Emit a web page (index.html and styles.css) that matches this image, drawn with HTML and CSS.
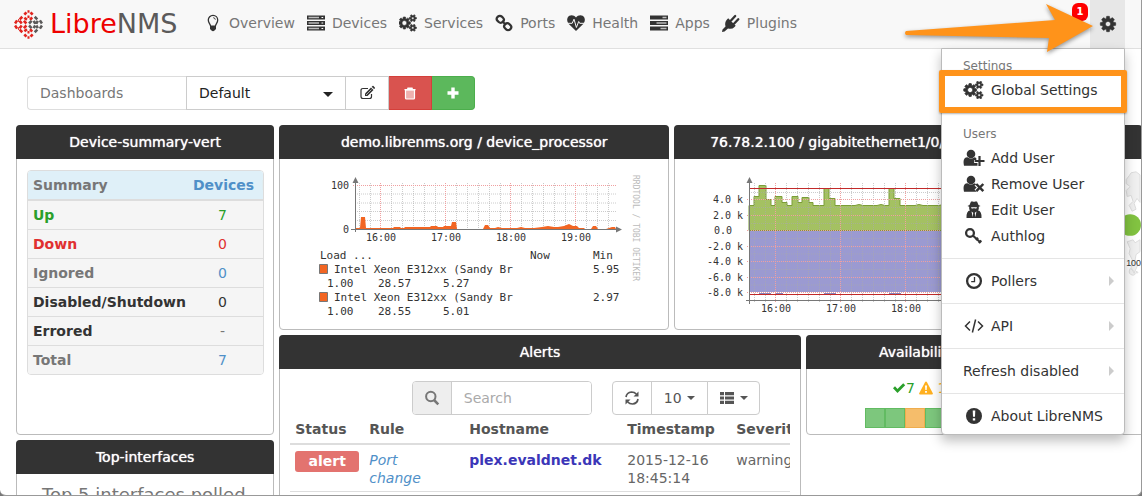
FILE: index.html
```html
<!DOCTYPE html>
<html lang="en">
<head>
<meta charset="utf-8">
<title>LibreNMS</title>
<link rel="stylesheet" href="styles.css">
</head>
<body>
<svg class="sprite" aria-hidden="true">
  <symbol id="i-bulb" viewBox="0 0 18 18"><path d="M6.6 12.2C6.3 9.800 4.300 9 4.300 6A4.700 4.700 0 0 1 13.700 6C13.700 9 11.700 9.800 11.400 12.200Z" fill="none" stroke="currentColor" stroke-width="1.300"/><path d="M9.300 3.700Q11 3.800 11.300 5.600" fill="none" stroke="currentColor"/><path d="M6 12h6v3l-1.500 1.500Q9 18 7.500 16.500L6 15z"/></symbol>
  <symbol id="i-server" viewBox="0 0 18 18"><path d="M0 1.500h18v4H0zM0 7h18v4H0zM0 12.500h18v4H0z"/><path d="M1.500 2.800H12v1.400H1.500zM1.500 8.300H12v1.400H1.500zM1.500 13.800H12v1.400H1.500z" fill="#bbb"/><path d="M14.500 3h1.700v1h-1.700zM14.500 8.500h1.700v1h-1.700zM14.500 14h1.700v1h-1.700z" fill="#fff"/></symbol>
  <symbol id="i-tasks" viewBox="0 0 18 18"><path d="M0 1.500h18v4H0zM0 7h18v4H0zM0 12.500h18v4H0z"/><path d="M12.500 2.800h4v1.400h-4zM6.500 8.300h10v1.400h-10zM10.500 13.800h6v1.400h-6z" fill="#bbb"/></symbol>
  <symbol id="i-cog" viewBox="0 0 1792 1792"><path d="M1152 896q0-106-75-181t-181-75-181 75-75 181 75 181 181 75 181-75 75-181zm512-109v222q0 12-8 23t-20 13l-185 28q-19 54-39 91 35 50 107 138 10 12 10 25t-9 23q-27 37-99 108t-94 71q-12 0-26-9l-138-108q-44 23-91 38-16 136-29 186-7 28-36 28h-222q-14 0-24.500-8.500t-11.500-21.500l-28-184q-49-16-90-37l-141 107q-10 9-25 9-14 0-25-11-126-114-165-168-7-10-7-23 0-12 8-23 15-21 51-66.500t54-70.500q-27-50-41-99l-183-27q-13-2-21-12.500t-8-23.500v-222q0-12 8-23t19-13l186-28q14-46 39-92-40-57-107-138-10-12-10-24 0-10 9-23 26-36 98.500-107.500t94.500-71.500q13 0 26 10l138 107q44-23 91-38 16-136 29-186 7-28 36-28h222q14 0 24.500 8.500t11.500 21.500l28 184q49 16 90 37l142-107q9-9 24-9 13 0 25 10 129 119 165 170 7 8 7 22 0 12-8 23-15 21-51 66.500t-54 70.500q26 50 41 98l183 28q13 2 21 12.500t8 23.500z" stroke="currentColor" stroke-width="50"/></symbol>
  <symbol id="i-cogs" viewBox="0 0 1920 1792"><g stroke="currentColor" stroke-width="70"><path d="M832 896q0-106-75-181t-181-75-181 75-75 181 75 181 181 75 181-75 75-181zm384-91v185q0 10-7 19.500t-16 10.500l-155 24q-11 35-32 76 34 48 90 115 7 11 7 20 0 12-7 19-23 30-82.500 89.500t-78.500 59.500q-11 0-21-7l-115-90q-37 19-77 31-11 108-23 155-7 24-30 24h-186q-11 0-20-7.500t-10-17.500l-23-153q-34-10-75-31l-118 89q-7 7-20 7-11 0-21-8-144-133-144-160 0-9 7-19 10-14 41-53t47-61q-23-44-35-82l-152-24q-10-1-17-9.500t-7-19.500v-185q0-10 7-19.500t16-10.500l155-24q11-35 32-76-34-48-90-115-7-11-7-20 0-12 7-20 22-30 82-89t79-59q11 0 21 7l115 90q34-18 77-32 11-108 23-154 7-24 30-24h186q11 0 20 7.500t10 17.500l23 153q34 10 75 31l118-89q8-7 20-7 11 0 21 8 144 133 144 160 0 8-7 19-12 16-42 54t-45 60q23 48 34 82l152 23q10 2 17 10.500t7 19.500z"/><g id="smallcog"><path d="M1600 1408q0-52-38-90t-90-38-90 38-38 90q0 53 37.500 90.500t90.500 37.500 90.500-37.500 37.500-90.500zm256-70v140q0 16-149 31-12 27-30 52 51 113 51 138 0 4-4 7-122 71-124 71-8 0-46-47t-52-68q-20 2-30 2t-30-2q-14 21-52 68t-46 47q-2 0-124-71-4-3-4-7 0-25 51-138-18-25-30-52-149-15-149-31v-140q0-16 149-31 13-29 30-52-51-113-51-138 0-4 4-7 4-2 35-20t59-34 30-16q8 0 46 46.500t52 67.500q20-2 30-2t30 2q51-71 92-112l6-2q4 0 124 70 4 3 4 7 0 25-51 138 17 23 30 52 149 15 149 31z"/></g><use href="#smallcog" y="-1024"/></g></symbol>
  <symbol id="i-link" viewBox="0 0 18 18"><g fill="none" stroke="currentColor" stroke-width="2.200"><rect x="-3.600" y="-3" width="7.200" height="6" rx="2.800" transform="translate(5.300 5.300) rotate(45)"/><rect x="-3.600" y="-3" width="7.200" height="6" rx="2.800" transform="translate(12.700 12.700) rotate(45)"/><path d="M7 7l4 4"/></g></symbol>
  <symbol id="i-heart" viewBox="0 0 18 18"><path d="M9 17L1.800 10Q-.8 6.700.7 3.600C2.300.6 6.800.6 9 3.600c2.200-3 6.700-3 8.300 0q1.500 3.100-1.100 6.400z"/><path d="M0 9.300h5.200L7 5.200l2.400 8.300 2.300-6 1 1.800H18" fill="none" stroke="#f8f8f8" stroke-width="1"/></symbol>
  <symbol id="i-plug" viewBox="0 0 18 18"><path d="M0 18l.5-2.500L3.500 12.500Q2.300 8.500 5 5.500l1.200-1.200 7.500 7.500L12.500 13q-2.500 2.700-6.500 1.500L2.500 17.500z"/><path d="M9 6.500L13.200 2M12 9.800l4.300-4.500" stroke="currentColor" stroke-width="2.300" stroke-linecap="round"/></symbol>
  <symbol id="i-plus-user" viewBox="0 0 22 18"><circle cx="8" cy="5" r="4.300"/><path d="M1 16.800Q-.8 8.500 4.500 8.300q3.500 2.400 7 0l1.800.8v1.900h-2.200v3h3.400v2.800z"/><path d="M16.500 7v10M11.700 12h9.800" stroke="currentColor" stroke-width="2.200"/></symbol>
  <symbol id="i-times-user" viewBox="0 0 22 18"><circle cx="8" cy="5" r="4.300"/><path d="M1 16.800Q-.8 8.500 4.500 8.300q3.500 2.400 7 0l1.800 1-1.800 1.500 2.200 1.700-2.200 2 2.200 2.300z"/><path d="M13.300 9l7 7.200M20.300 9l-7 7.200" stroke="currentColor" stroke-width="2.500"/></symbol>
  <symbol id="i-secret" viewBox="0 0 22 18"><path d="M6.500 4L8 .4h2l1 .6 1-.6h2L15.500 4l2 .9-1.700.8v2q0 1-1 1.500 4.200 1 3.700 7.900h-15q-.5-6.900 3.700-7.900-1-.5-1-1.500v-2l-1.700-.8z"/><path d="M8 6.300h6l-.6 1.300h-1.600L11 7l-.8.600H8.600z" fill="#fff"/><path d="M8.500 10.500l1.700 1.200-.4 4.500zM13.500 10.500l-1.700 1.200.4 4.500z" fill="#fff"/></symbol>
  <symbol id="i-key" viewBox="0 0 22 18"><circle cx="7" cy="6" r="3.900" fill="none" stroke="currentColor" stroke-width="2.300"/><path d="M9.800 8.500l8 7.200M12.800 13l2.200-2.300M15.800 16l2.500-2.600" stroke="currentColor" stroke-width="2.200"/></symbol>
  <symbol id="i-clock" viewBox="0 0 22 18"><circle cx="11" cy="9" r="6.900" fill="none" stroke="currentColor" stroke-width="2.300"/><path d="M11.500 5v4.700H8.200" fill="none" stroke="currentColor" stroke-width="1.300"/></symbol>
  <symbol id="i-code" viewBox="0 0 22 18"><path d="M7 4.500L2.500 9 7 13.500M15 4.500L19.500 9 15 13.500M12.600 2.500l-3.200 13" fill="none" stroke="currentColor" stroke-width="1.500"/></symbol>
  <symbol id="i-excl" viewBox="0 0 22 18"><circle cx="11" cy="9" r="8"/><path d="M9.700 3.500h2.600l-.3 6.300h-2zM9.800 11.200h2.400v2.400H9.800z" fill="#fff"/></symbol>
  <symbol id="i-edit" viewBox="0 0 16 16"><path d="M12.500 9v2.500q0 2-2 2H4q-2 0-2-2v-6q0-2 2-2h5" fill="none" stroke="currentColor" stroke-width="1.200"/><path d="M6 11V8.500l6-6 2.500 2.500-6 6z"/><path d="M12.700 1.800l.8-.8q.5-.3 1 0l1.300 1.400q.4.500 0 1l-.8.700z"/><path d="M7 10l5.500-5.500" stroke="#fff" stroke-width=".6"/></symbol>
  <symbol id="i-trash" viewBox="0 0 16 16"><path d="M3.500 5h9v8q0 1-1 1h-7q-1 0-1-1z" fill="#fff" fill-opacity=".55" stroke="currentColor" stroke-width="1.200"/><path d="M2.500 4h11v1.300h-11zM5.500 2.500h5L11 4H5z"/></symbol>
  <symbol id="i-plus" viewBox="0 0 16 16"><path d="M6.300 2.500h3.400v3.800h3.800v3.400H9.700v3.800H6.300V9.700H2.500V6.300h3.800z"/></symbol>
  <symbol id="i-search" viewBox="0 0 16 16"><circle cx="6.800" cy="6.500" r="4.700" fill="none" stroke="currentColor" stroke-width="2"/><path d="M10 10l4.300 4.300" stroke="currentColor" stroke-width="2.500"/></symbol>
  <symbol id="i-refresh" viewBox="0 0 16 16"><path d="M2 7q.7-4.500 5.500-5 3 0 4.800 2M14 9q-.7 4.500-5.500 5-3 0-4.800-2" fill="none" stroke="currentColor" stroke-width="1.700"/><path d="M14.500 1.500v5h-5zM1.500 14.500v-5h5z"/></symbol>
  <symbol id="i-list" viewBox="0 0 16 16"><path d="M1 2h4v3.200H1zM6 2h9v3.200H6zM1 6.400h4v3.200H1zM6 6.400h9v3.200H6zM1 10.800h4V14H1zM6 10.800h9V14H6z"/></symbol>
  <symbol id="i-check" viewBox="0 0 14 14"><path d="M1 7.300l2-2 2.500 2.600 5.700-5.700 2 2L5.500 12z"/></symbol>
  <symbol id="i-warn" viewBox="0 0 14 14"><path d="M7 .5q.6 0 1 .7l5.800 11q.4 1-.8 1.300H1q-1.200-.3-.8-1.300L6 1.200q.4-.7 1-.7z"/><path d="M6 4.500h2l-.3 4.500H6.300zM6.100 10h1.800v1.800H6.100z" fill="#fff"/></symbol>
  <symbol id="i-times" viewBox="0 0 14 14"><path d="M2.500 2.500l9 9M11.500 2.500l-9 9" stroke="currentColor" stroke-width="2.800"/></symbol>
</svg>

<div class="window">
  <nav class="navbar">
    <a class="brand" href="#">
      <svg class="mark" viewBox="0 0 28 28" fill="none" stroke-width="2.500">
        <g stroke="#e1251f">
          <path d="M10 4.500l2-2.300M16 2.200l2 2.300M13 1.500h2M5.500 9L8 6.500M10 7.500l2.500 2M15.500 9.500l2-2.300M13 6.500h2"/>
          <path d="M1 13l2-3M5.500 10.500l2 2.500M1 15l2 3M5.500 17.500l2-2.500M9.500 10.500L12 13M9.500 17.500L12 15M4 10h1M4 18h1"/>
          <path d="M5.500 19L8 21.500M10 20.500l2.500-2M15.500 18.500l2 2.300M10 23.500l2 2.300M16 25.800l2-2.300M13 26.500h2M13 21.500h2"/>
        </g>
        <g stroke="#5b5a5a">
          <path d="M20 6.500L22.500 9M14.500 13l2.500-2.500M14.500 15l2.500 2.500M19 10.500l1.500 2.500M19 17.500l1.500-2.500M25 10l2 3M25 18l2-3M23 10.500L21.500 13M23 17.500L21.500 15M20 21.500l2.500-2.500"/>
        </g>
      </svg>
      <span class="brand-text"><span class="brand-red">Libre</span>NMS</span>
    </a>
    <ul class="menu">
      <li><a href="#"><svg><use href="#i-bulb"/></svg>Overview</a></li>
      <li><a href="#"><svg><use href="#i-server"/></svg>Devices</a></li>
      <li><a href="#"><svg><use href="#i-cogs"/></svg>Services</a></li>
      <li><a href="#"><svg><use href="#i-link"/></svg>Ports</a></li>
      <li><a href="#"><svg><use href="#i-heart"/></svg>Health</a></li>
      <li><a href="#"><svg><use href="#i-tasks"/></svg>Apps</a></li>
      <li><a href="#"><svg><use href="#i-plug"/></svg>Plugins</a></li>
    </ul>
    <div class="settings">
      <span class="badge">1</span>
      <button class="gear" type="button" aria-label="Settings"><svg><use href="#i-cog"/></svg></button>
      <div class="dropdown">
        <h6>Settings</h6>
        <a href="#"><svg><use href="#i-cogs"/></svg>Global Settings</a>
        <hr>
        <h6>Users</h6>
        <a href="#"><svg><use href="#i-plus-user"/></svg>Add User</a>
        <a href="#"><svg><use href="#i-times-user"/></svg>Remove User</a>
        <a href="#"><svg><use href="#i-secret"/></svg>Edit User</a>
        <a href="#"><svg><use href="#i-key"/></svg>Authlog</a>
        <hr>
        <a class="sub" href="#"><svg><use href="#i-clock"/></svg>Pollers</a>
        <hr>
        <a class="sub" href="#"><svg><use href="#i-code"/></svg>API</a>
        <hr>
        <a class="sub" href="#">Refresh disabled</a>
        <hr>
        <a href="#"><svg><use href="#i-excl"/></svg>About LibreNMS</a>
        <div class="highlight"></div>
      </div>
      <svg class="arrow" viewBox="0 0 200 60"><path d="M13 31q-2 2 0 4l143 3-2 14L200 26 153 4l9 16z" fill="#ff931a"/></svg>
    </div>
  </nav>

  <main>
    <form class="toolbar">
      <label class="addon" for="dash">Dashboards</label>
      <span class="picker"><select id="dash"><option>Default</option></select></span>
      <button class="btn" type="button" aria-label="Edit"><svg><use href="#i-edit"/></svg></button>
      <button class="btn red" type="button" aria-label="Delete"><svg><use href="#i-trash"/></svg></button>
      <button class="btn green" type="button" aria-label="Add"><svg><use href="#i-plus"/></svg></button>
    </form>

    <div class="grid">
      <section class="widget summary">
        <h2>Device-summary-vert</h2>
        <div class="summary-wrap">
          <table>
            <thead><tr><th>Summary</th><th><a href="#">Devices</a></th><th><a href="#">Ports</a></th></tr></thead>
            <tbody>
              <tr><th class="c-green">Up</th><td><a class="c-green" href="#">7</a></td><td></td></tr>
              <tr><th class="c-red">Down</th><td><a class="c-red" href="#">0</a></td><td></td></tr>
              <tr><th class="c-grey">Ignored</th><td><a href="#">0</a></td><td></td></tr>
              <tr><th>Disabled/Shutdown</th><td>0</td><td></td></tr>
              <tr><th>Errored</th><td class="c-grey">-</td><td></td></tr>
              <tr><th class="c-grey">Total</th><td><a href="#">7</a></td><td></td></tr>
            </tbody>
          </table>
        </div>
      </section>

      <section class="widget cpu">
        <h2>demo.librenms.org / device_processor</h2>
        <svg class="graph" viewBox="280 159 388 168">
          <path d="M355 194h262M355 203h262M355 211.500h262M355 220.500h262M359.500 183v48M370.500 183v48M391.500 183v48M402.500 183v48M413.500 183v48M424.500 183v48M435.500 183v48M456.500 183v48M467.500 183v48M478.500 183v48M489.500 183v48M500.500 183v48M521.500 183v48M532.500 183v48M543.500 183v48M554.500 183v48M565.500 183v48M586.500 183v48M597.500 183v48M608.500 183v48" class="minor"/>
          <path d="M353 185.500h264M380.500 183v48M445.500 183v48M510.500 183v48M575.500 183v48" class="major"/>
          <path d="M355 229v-1h5l1-11h4l1 11h27l1-1h6l1 1h3l1-1h25l1-1h6l1 1h5l1-1h7l1-4h4l1 7h26l2-4h3l2 3h5l3-1 4 1h15l4-1 4 1h9l8-1 6-1 6 1h4l6-1 5-2 4 2h4l2 2h5l1 1h6l2-3h3l2 3h8l6-2h3l1 2z" fill="#f26522"/>
          <path d="M355.500 232V182M351 229.500h265" class="axis"/>
          <path d="M352.500 183l3-6 3 6zM616 226.500l6 3-6 3z" fill="#777"/>
          <g class="tick">
            <text x="349" y="189" text-anchor="end">100</text><text x="349" y="233" text-anchor="end">0</text>
            <text x="366" y="241">16:00</text><text x="431" y="241">17:00</text><text x="496" y="241">18:00</text><text x="561" y="241">19:00</text>
          </g>
          <g class="legend">
            <text x="320" y="259">Load ...</text><text x="530" y="259">Now</text><text x="593" y="259">Min</text>
            <text x="334" y="273">Intel Xeon E312xx (Sandy Br</text><text x="593" y="273">5.95</text>
            <text x="327" y="287">1.00</text><text x="378" y="287">28.57</text><text x="443" y="287">5.27</text>
            <text x="334" y="301">Intel Xeon E312xx (Sandy Br</text><text x="593" y="301">2.97</text>
            <text x="327" y="315">1.00</text><text x="378" y="315">28.55</text><text x="443" y="315">5.01</text>
          </g>
          <path d="M319.500 264.500h8v9h-8zM319.500 292.500h8v9h-8z" fill="#f26522" stroke="#777"/>
          <text class="credit" transform="translate(633 175) rotate(90)">RRDTOOL / TOBI OETIKER</text>
        </svg>
      </section>

      <section class="widget port">
        <h2>76.78.2.100 / gigabitethernet1/0/1 / port_bits</h2>
        <svg class="graph" viewBox="675 159 388 168">
          <path d="M749 230.500v-25h5v-9h5v-11h7v14h5v6h4v-9h7v6h5v3h5v-9h6v6h4v-5h7v5h4v3h11v-17h5v10h6v7h20l4-1 4 1h14l4-1 4 1h4v-17h5v10h6v7h15l4-1 4 1h16l4-1h67v26z" fill="#a4c162" stroke="#7b9d36"/>
          <path d="M749 231h310v61H749z" fill="#9b9ad1"/>
          <path d="M759 293.500h12M775 293.500h8M824 293.500h12M889 293.500h12" stroke="#8584bd"/>
          <path d="M749 192.500h310M749 207.500h310M749 223.500h310M749 238.500h310M749 254h310M749 269.500h310M749 285h310M754.500 183v119M765.500 183v119M786.500 183v119M797.500 183v119M808.500 183v119M819.500 183v119M830.500 183v119M851.500 183v119M862.500 183v119M873.500 183v119M884.500 183v119M895.500 183v119M916.500 183v119M927.500 183v119M938.500 183v119" class="minor"/>
          <path d="M747 199.500h312M747 215.500h312M747 230.500h312M747 246.500h312M747 261.500h312M747 277.500h312M747 292.500h312M775.500 183v119M840.500 183v119M905.500 183v119" class="major"/>
          <path d="M749 188.500h310M749 294.500h310" stroke="#c22a2a"/>
          <path d="M749.500 304V182M746 300.500h313" class="axis"/>
          <path d="M746.500 183l3-6 3 6z" fill="#777"/>
          <g class="tick">
            <text x="743" y="203" text-anchor="end">4.0 k</text><text x="743" y="219" text-anchor="end">2.0 k</text><text x="732" y="234" text-anchor="end">0.0</text><text x="743" y="250" text-anchor="end">-2.0 k</text><text x="743" y="265" text-anchor="end">-4.0 k</text><text x="743" y="281" text-anchor="end">-6.0 k</text><text x="743" y="296" text-anchor="end">-8.0 k</text>
            <text x="761" y="312">16:00</text><text x="826" y="312">17:00</text><text x="891" y="312">18:00</text>
          </g>
        </svg>
      </section>

      <section class="widget map">
        <h2></h2>
        <svg class="graph" viewBox="1070 159 72 274">
          <path d="M1127 180l3-4 2-3 5-1 4 3v28l-3-4-3 5 2 6-4 2-3-6 4-4-2-6-4 1-1-6 4-4-4-3zM1128 243l6-2 2 3 5-3v12l-4 3-1 6 3 4-4 9-3-6 1-8-3-6 1-5zM1131 270q-3 6 3 7 4-1 1-4zM1137 273l2 1-1 1z" fill="#f0f0f0" stroke="#ddd"/>
          <circle cx="1131" cy="226" r="11" fill="#82c341"/>
          <text x="1127" y="268">100</text>
        </svg>
      </section>

      <section class="widget alerts">
        <h2>Alerts</h2>
        <div class="alert-tools">
          <div class="search"><label for="q"><svg><use href="#i-search"/></svg></label><input id="q" type="text" placeholder="Search"></div>
          <div class="group">
            <button class="btn b-refresh" type="button" aria-label="Refresh"><svg><use href="#i-refresh"/></svg></button>
            <button class="btn b-count" type="button">10<i class="caret"></i></button>
            <button class="btn b-cols" type="button" aria-label="Columns"><svg><use href="#i-list"/></svg><i class="caret"></i></button>
          </div>
        </div>
        <div class="alert-wrap">
          <table>
            <colgroup><col class="w-status"><col class="w-rule"><col class="w-host"><col class="w-time"><col></colgroup>
            <thead><tr><th>Status</th><th>Rule</th><th>Hostname</th><th>Timestamp</th><th>Severity</th></tr></thead>
            <tbody><tr><td><span class="tag">alert</span></td><td class="rule-cell"><a class="rule" href="#">Port change</a></td><td><a class="host" href="#">plex.evaldnet.dk</a></td><td>2015-12-16 18:45:14</td><td>warning</td></tr></tbody>
          </table>
        </div>
      </section>

      <section class="widget avail">
        <h2>Availability map</h2>
        <div class="counts"><span class="c-green"><svg><use href="#i-check"/></svg>7</span><span class="c-amber"><svg><use href="#i-warn"/></svg> 1</span><span class="c-red"><svg><use href="#i-times"/></svg> 0</span></div>
        <div class="boxes"><i></i><i></i><i class="amber"></i><i></i><i></i><i></i><i></i></div>
      </section>

      <section class="widget top">
        <h2>Top-interfaces</h2>
        <p>Top 5 interfaces polled</p>
      </section>
    </div>
  </main>
</div>
</body>
</html>
```
FILE: styles.css
```css
* { box-sizing: border-box; }
body {
  margin: 0;
  background: #777;
  color: #333;
  font: 14px/20px "DejaVu Sans", Verdana, sans-serif;
}
a { color: #5090c8; text-decoration: none; }
svg { fill: currentColor; }
button, input, select { font: inherit; color: inherit; margin: 0; }
.sprite { position: absolute; width: 0; height: 0; }

.window {
  display: flex;
  flex-direction: column;
  height: 100vh;
  overflow: hidden;
  background: #fff;
  border: solid #999;
  border-width: 0 1px 1px 0;
  border-radius: 0 0 6px 6px;
}

/* Navigation */
.navbar {
  display: flex;
  flex: none;
  height: 49px;
  padding: 0 16px 0 14px;
  background: #f8f8f8;
  border-bottom: 1px solid #e0e0e0;
}
.brand { display: flex; align-items: center; width: 190px; gap: 7px; color: #5b5a5a; }
.mark { width: 29px; height: 29px; }
.brand-text { font-size: 27px; line-height: 48px; }
.brand-red { color: #ee0000; }
.menu { display: flex; gap: 12px; margin: 0; padding: 0; list-style: none; }
.menu a { display: flex; align-items: center; gap: 7px; height: 46px; color: #777; }
.menu svg { width: 18px; height: 18px; color: #333; }
.settings { position: relative; display: flex; margin-left: auto; }
.badge {
  height: 18px;
  width: 16px;
  margin: 3px 2px 0 0;
  border-radius: 6px;
  background: #f00;
  color: #fff;
  font-size: 10px;
  font-weight: bold;
  line-height: 18px;
  text-align: center;
}
.gear { width: 35px; height: 48px; padding: 0; border: 0; background: #e7e7e7; }
.gear svg { display: block; width: 18px; height: 18px; margin: 0 auto; }
.arrow {
  position: absolute;
  z-index: 3;
  top: 0;
  right: 32px;
  width: 200px;
  height: 60px;
  filter: drop-shadow(0 2px 2px rgba(0, 0, 0, .4));
}

.dropdown {
  position: absolute;
  z-index: 2;
  top: 48px;
  right: 0;
  width: 184px;
  padding: 5px 0;
  background: #fff;
  border: 1px solid #bbb;
  border-radius: 0 0 4px 4px;
  box-shadow: 0 6px 12px rgba(0, 0, 0, .25);
}
.dropdown h6 { margin: 0; padding: 4px 21px 2px; color: #777; font-size: 12px; font-weight: normal; line-height: 17px; }
.dropdown a { display: flex; align-items: center; height: 26px; padding: 0 21px; color: #333; white-space: nowrap; }
.dropdown a svg { width: 22px; height: 18px; margin-right: 6px; }
.dropdown hr { height: 1px; margin: 9px 0; border: 0; background: #e5e5e5; }
.sub::after {
  content: "";
  margin: 0 -11px 0 auto;
  border: solid transparent;
  border-width: 5px 0 5px 5px;
  border-left-color: #ccc;
}
.highlight {
  position: absolute;
  top: 21px;
  left: -3px;
  right: -3px;
  height: 43px;
  border: 6px solid #ff931a;
  border-radius: 2px;
  box-shadow: 0 1px 2px rgba(0, 0, 0, .3);
  pointer-events: none;
}

/* Dashboard toolbar */
main { flex: 1; min-height: 0; }
.toolbar { display: flex; height: 34px; margin: 27px 0 15px 27px; }
.addon { width: 159px; padding: 6px 12px; border: 1px solid #ddd; border-right: 0; border-radius: 4px 0 0 4px; color: #777; }
.picker { position: relative; }
.picker::after {
  content: "";
  position: absolute;
  right: 13px;
  top: 16px;
  border: solid transparent;
  border-width: 5px 5px 0;
  border-top-color: #222;
}
.picker select { appearance: none; width: 160px; height: 34px; padding: 0 12px; border: 1px solid #ccc; border-radius: 0; background: #fff; color: #222; }
.btn { display: flex; align-items: center; justify-content: center; height: 34px; width: 43px; padding: 0; border: 1px solid #ccc; border-left: 0; background: #fff; }
.btn svg { width: 16px; height: 16px; }
.btn.red { background: #d9534f; border-color: #d43f3a; color: #fff; }
.btn.green { background: #5cb85c; border-color: #4cae4c; border-radius: 0 4px 4px 0; color: #fff; }

/* Widget grid */
.grid {
  display: grid;
  grid-template-columns: repeat(8, minmax(0, 1fr)) 72px;
  grid-template-rows: 205px 100px 200px;
  gap: 5px;
  padding-left: 16px;
}
.widget { border: 1px solid #bbb; border-radius: 4px; }
.widget h2 {
  height: 34px;
  margin: -1px -1px 0;
  border-radius: 4px 4px 0 0;
  background: #333;
  color: #fff;
  font-size: 14px;
  font-weight: normal;
  line-height: 34px;
  text-align: center;
  text-shadow: 0 0 1px #fff;
  white-space: nowrap;
}
.summary { grid-area: 1 / 1 / 3 / 3; }
.cpu { grid-area: 1 / 3 / 2 / 6; }
.port { grid-area: 1 / 6 / 2 / 9; }
.map { grid-area: 1 / 9 / 3 / 10; border-right: 0; border-radius: 4px 0 0 4px; }
.alerts { grid-area: 2 / 3 / 4 / 7; }
.avail { grid-area: 2 / 7 / 3 / 9; }
.top { grid-area: 3 / 1 / 4 / 3; }

.c-green { color: #2a9f2a; }
.c-red { color: #e03030; }
.c-grey { color: #777; }
.c-amber { color: #ffb020; }

.summary-wrap { margin: 11px 9px 0 10px; overflow: hidden; border: 1px solid #ddd; border-radius: 4px; }
.summary-wrap table { width: 280px; table-layout: fixed; border-collapse: collapse; background: #f5f5f5; }
.summary-wrap th, .summary-wrap td { height: 29px; padding: 0 5px; border-top: 1px solid #ddd; text-align: center; }
.summary-wrap th:first-child { width: 160px; text-align: left; white-space: nowrap; }
.summary-wrap th:nth-child(2) { width: 69px; }
.summary-wrap thead th { border-top: 0; border-bottom: 2px solid #ddd; background: #dff0f8; color: #777; }
.summary-wrap thead th:last-child { text-align: left; }

/* Graphs */
.graph { display: block; width: 388px; height: 168px; margin: 0 auto; }
.map .graph { width: 71px; height: 270px; font: 9px "Liberation Sans", sans-serif; }
.minor { fill: none; stroke: #aaa; stroke-opacity: .6; stroke-dasharray: 1 1; }
.major { fill: none; stroke: #f0a0a0; stroke-dasharray: 1 1; }
.axis { fill: none; stroke: #777; }
.tick { font: 10px "DejaVu Sans Mono", monospace; }
.legend { font: 11px "DejaVu Sans Mono", monospace; }
.credit { fill: #bbb; font: 8px "DejaVu Sans Mono", monospace; }

/* Alerts */
.alert-tools { display: flex; gap: 20px; justify-content: flex-end; margin: 12px 40px 4px; }
.search { display: flex; width: 180px; height: 34px; border: 1px solid #ccc; border-radius: 4px; overflow: hidden; }
.search label { display: flex; align-items: center; justify-content: center; width: 39px; background: #eee; border-right: 1px solid #ccc; color: #777; }
.search svg { width: 16px; height: 16px; }
.search input { flex: 1; min-width: 0; padding: 0 12px; border: 0; }
.search input::placeholder { color: #aaa; }
.group { display: flex; color: #555; }
.group .btn { border-left: 1px solid #ccc; margin-left: -1px; }
.group .b-refresh { width: 40px; margin-left: 0; border-radius: 4px 0 0 4px; }
.group .b-count { width: 57px; }
.group .b-cols { width: 53px; border-radius: 0 4px 4px 0; }
.caret { margin-left: 5px; border: solid transparent; border-width: 4px 4px 0; border-top-color: currentColor; }
.alert-wrap { margin: 0 10px; overflow: hidden; }
.alert-wrap table { width: 530px; table-layout: fixed; border-collapse: collapse; color: #666; }
.alert-wrap th, .alert-wrap td { text-align: left; vertical-align: top; }
.alert-wrap th { padding: 0 5px 4px; border-bottom: 2px solid #ddd; color: #555; }
.alert-wrap td { padding: 6px 5px 4px; border-bottom: 1px solid #ddd; line-height: 18px; }
.alert-wrap .rule-cell { padding-right: 30px; }
.w-status { width: 74px; }
.w-rule { width: 100px; }
.w-host { width: 158px; }
.w-time { width: 109px; }
.tag { display: block; height: 21px; margin: 0; border-radius: 3px; background: #e3736f; color: #fff; font-weight: bold; line-height: 20px; text-align: center; }
.rule { font-style: italic; }
.host { color: #3b36b8; font-weight: bold; }

/* Availability */
.counts { display: flex; justify-content: center; gap: 4px; height: 20px; margin: 9px 0 10px; }
.counts svg { width: 14px; height: 14px; vertical-align: -2px; }
.boxes { display: flex; justify-content: center; }
.boxes i { width: 20px; height: 20px; background: #7dc77d; border: 1px solid #62bb62; }
.boxes .amber { background: #f5bd6b; border-color: #efad4d; }

.top p { margin: 9px 25px; color: #777; font-size: 18px; line-height: 24px; white-space: nowrap; }
```
